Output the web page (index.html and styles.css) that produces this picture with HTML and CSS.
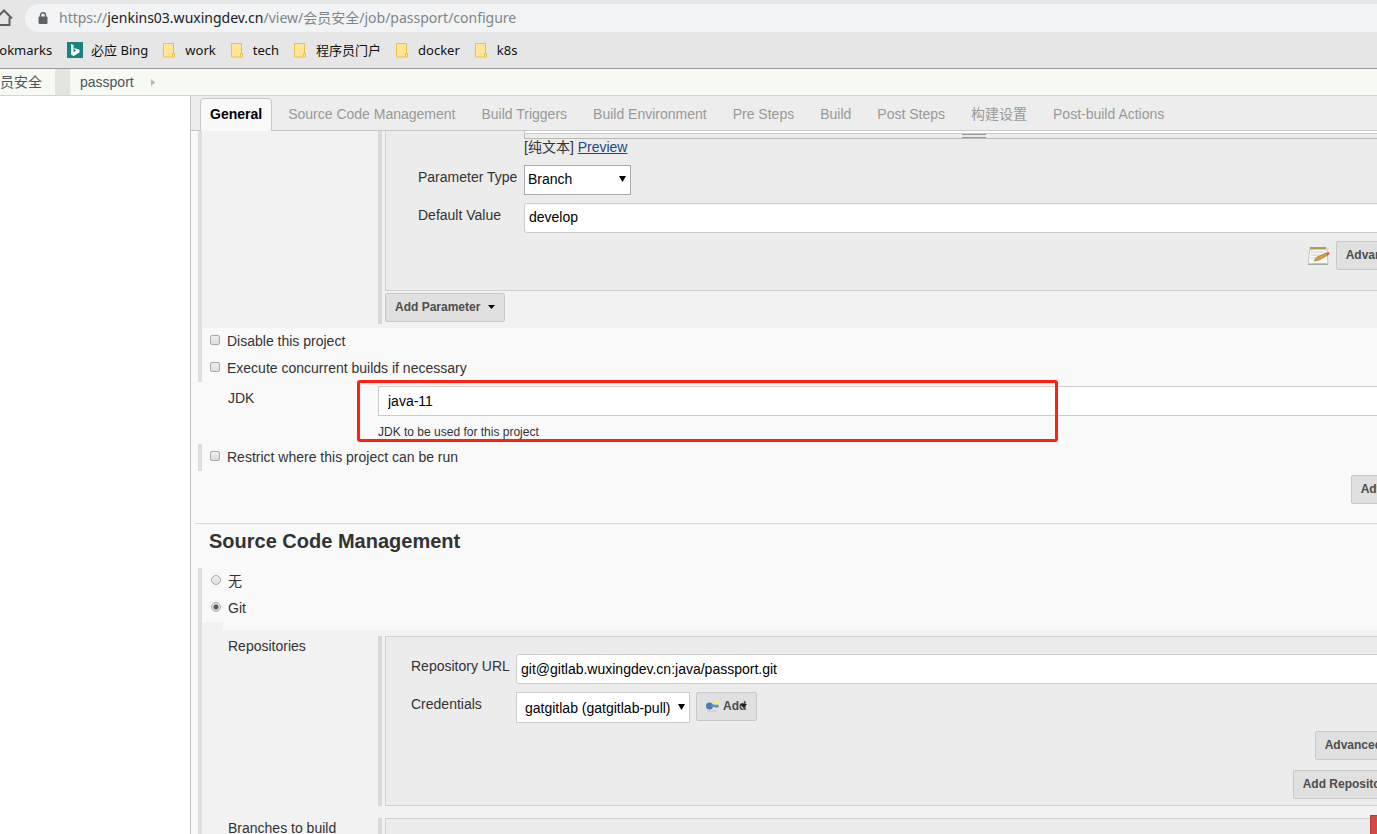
FILE: index.html
```html
<!DOCTYPE html>
<html lang="en">
<head>
<meta charset="utf-8">
<title>passport Config [Jenkins]</title>
<link rel="stylesheet" href="styles.css">
</head>
<body>
<header class="browser">
  <div class="toolbar">
    <svg class="home" width="18" height="18" viewBox="0 0 18 18" aria-hidden="true"><path d="M1 9.500 9 1.500l8 8M3.500 8.500V16h11V8.500" fill="none" stroke="#5b5e62" stroke-width="2"/></svg>
    <div class="address">
      <svg width="10" height="12" viewBox="0 0 10 12" aria-hidden="true"><path d="M2.500 5V3.200a2.500 2.500 0 0 1 5 0V5" fill="none" stroke="#5f6368" stroke-width="1.400"/><rect x="0.500" y="4.500" width="9" height="7.500" rx="1" fill="#5f6368"/></svg>
      <span class="url">https://<b>jenkins03.wuxingdev.cn</b>/view/会员安全/job/passport/configure</span>
    </div>
  </div>
  <nav class="bookmarks" aria-label="Bookmarks">
    <a href="#">Bookmarks</a>
    <a href="#"><svg width="16" height="16" viewBox="0 0 16 16" aria-hidden="true"><rect width="16" height="16" fill="#188480"/><path d="M4 2l2.500 1v7.300L9.300 8.600 7.900 8 7.100 5.900 12.500 7.800v2.700L6.500 14 4 12.600z" fill="#fff"/></svg>必应 Bing</a>
    <a href="#"><svg class="folder" width="12" height="15" viewBox="0 0 12 15" aria-hidden="true"><path d="M.5.500h10V10.500h1v3.500H.5z" fill="#ffe594" stroke="#e8c04c"/><path d="M9.500 13.500v-3h1.500" fill="none" stroke="#e8c04c"/></svg>work</a>
    <a href="#"><svg class="folder" width="12" height="15" viewBox="0 0 12 15" aria-hidden="true"><path d="M.5.500h10V10.500h1v3.500H.5z" fill="#ffe594" stroke="#e8c04c"/><path d="M9.500 13.500v-3h1.500" fill="none" stroke="#e8c04c"/></svg>tech</a>
    <a href="#"><svg class="folder" width="12" height="15" viewBox="0 0 12 15" aria-hidden="true"><path d="M.5.500h10V10.500h1v3.500H.5z" fill="#ffe594" stroke="#e8c04c"/><path d="M9.500 13.500v-3h1.500" fill="none" stroke="#e8c04c"/></svg>程序员门户</a>
    <a href="#"><svg class="folder" width="12" height="15" viewBox="0 0 12 15" aria-hidden="true"><path d="M.5.500h10V10.500h1v3.500H.5z" fill="#ffe594" stroke="#e8c04c"/><path d="M9.500 13.500v-3h1.500" fill="none" stroke="#e8c04c"/></svg>docker</a>
    <a href="#"><svg class="folder" width="12" height="15" viewBox="0 0 12 15" aria-hidden="true"><path d="M.5.500h10V10.500h1v3.500H.5z" fill="#ffe594" stroke="#e8c04c"/><path d="M9.500 13.500v-3h1.500" fill="none" stroke="#e8c04c"/></svg>k8s</a>
  </nav>
</header>
<nav class="crumbs" aria-label="Breadcrumb">
  <a class="crumb-view" href="#">会员安全</a>
  <a class="crumb-job" href="#">passport</a>
  <svg width="4" height="7" viewBox="0 0 4 7" aria-hidden="true"><path d="M0 0l4 3.500L0 7z" fill="#b5b8b2"/></svg>
</nav>
<div class="page">
  <aside class="side"></aside>
  <main class="panel">
    <nav class="tabs" aria-label="Sections">
      <a class="tab active" href="#">General</a>
      <a class="tab" href="#">Source Code Management</a>
      <a class="tab" href="#">Build Triggers</a>
      <a class="tab" href="#">Build Environment</a>
      <a class="tab" href="#">Pre Steps</a>
      <a class="tab" href="#">Build</a>
      <a class="tab" href="#">Post Steps</a>
      <a class="tab" href="#">构建设置</a>
      <a class="tab" href="#">Post-build Actions</a>
    </nav>
    <form class="form">
      <div class="rail">
        <div class="nested params">
          <div class="repeat">
            <div class="box param-box">
              <div class="row">
                <span></span>
                <div>
                  <div class="textarea-end"></div>
                  <div class="resizer"><i></i></div>
                  <div class="preview">[纯文本] <a href="#">Preview</a></div>
                </div>
              </div>
              <div class="row">
                <label for="ptype">Parameter Type</label>
                <div class="select branch"><select id="ptype"><option>Branch</option></select><svg width="7" height="6" viewBox="0 0 7 6" aria-hidden="true"><path d="M0 0h7L3.500 6z"/></svg></div>
              </div>
              <div class="row">
                <label for="pdefault">Default Value</label>
                <input class="text" id="pdefault" type="text" value="develop">
              </div>
              <div class="actions">
                <svg width="22" height="20" viewBox="0 0 22 20" aria-hidden="true"><path d="M2 2h17l1 16H0z" fill="#f8f8f6" stroke="#c4c4c2"/><path d="M0 17.500h20v1.500H0z" fill="#aaa"/><path d="M2 1h16v2.500H2z" fill="#aaa054"/><path d="M3 6h12M3 9h9M3 12h5" stroke="#ccc"/><path d="M6 15l3-4 9-4 2 2-9 5z" fill="#d6a142" stroke="#8d6828" stroke-width=".6"/><path d="M18 7l3-1 .5 2-2 1.500z" fill="#e0524a"/></svg>
                <button type="button" class="btn">Advanced...</button>
              </div>
            </div>
            <button type="button" class="btn add-param">Add Parameter <svg width="7" height="4" viewBox="0 0 7 4" aria-hidden="true"><path d="M0 0h7L3.500 4z"/></svg></button>
          </div>
        </div>
        <label class="option"><input type="checkbox">Disable this project</label>
        <label class="option"><input type="checkbox">Execute concurrent builds if necessary</label>
      </div>
      <div class="jdk">
        <label for="jdk">JDK</label>
        <div>
          <div class="select wide"><select id="jdk"><option>java-11</option></select></div>
          <p class="help">JDK to be used for this project</p>
        </div>
        <div class="highlight"></div>
      </div>
      <div class="rail">
        <label class="option"><input type="checkbox">Restrict where this project can be run</label>
      </div>
      <div class="actions general-actions"><button type="button" class="btn">Advanced...</button></div>
      <h2 class="section">Source Code Management</h2>
      <div class="rail">
        <label class="option radio"><input type="radio" name="scm">无</label>
        <label class="option radio"><input type="radio" name="scm" checked>Git</label>
        <div class="notch"></div>
        <div class="nested repos">
          <span class="name">Repositories</span>
          <div class="repeat">
            <div class="box repo-box">
              <div class="row">
                <label for="url">Repository URL</label>
                <input class="text" id="url" type="text" value="git@gitlab.wuxingdev.cn:java/passport.git">
              </div>
              <div class="row">
                <label for="cred">Credentials</label>
                <div class="creds">
                  <div class="select cred"><select id="cred"><option>gatgitlab (gatgitlab-pull)</option></select><svg width="7" height="6" viewBox="0 0 7 6" aria-hidden="true"><path d="M0 0h7L3.500 6z"/></svg></div>
                  <button type="button" class="btn add-cred"><svg width="13" height="12" viewBox="0 0 13 12" aria-hidden="true"><ellipse cx="6" cy="11" rx="5" ry="1" fill="#d0d0d0"/><circle cx="3.500" cy="6" r="3.500" fill="#4b7ab5"/><path d="M5 4.500h7.500v2.500l-1 1-1-1-1 1-1-1H5z" fill="#5d8cc6"/><circle cx="10.500" cy="2.500" r="2.200" fill="#f7ef6e"/></svg><span>Add</span><svg class="caret" width="7" height="4" viewBox="0 0 7 4" aria-hidden="true"><path d="M0 0h7L3.500 4z"/></svg></button>
                </div>
              </div>
              <div class="actions"><button type="button" class="btn">Advanced...</button></div>
              <div class="actions"><button type="button" class="btn">Add Repository</button></div>
            </div>
          </div>
        </div>
        <div class="nested branches">
          <span class="name">Branches to build</span>
          <div class="repeat">
            <div class="box branch-box"><button type="button" class="delete" aria-label="Delete branch"></button></div>
          </div>
        </div>
      </div>
    </form>
  </main>
</div>
</body>
</html>
```
FILE: styles.css
```css
* { box-sizing: border-box; }

body {
  margin: 0;
  height: 100vh;
  display: flex;
  flex-direction: column;
  overflow: hidden;
  background: #fff;
  color: #333;
  font: 14px/18px "Liberation Sans", "Noto Sans CJK SC", sans-serif;
}

svg { flex: none; display: block; }
a { color: inherit; text-decoration: none; }

/* Browser chrome */
.browser {
  flex: none;
  background: #e6e6e6;
  border-bottom: 1px solid #999;
  font-family: "Noto Sans", "Noto Sans CJK SC", sans-serif;
}
.toolbar { display: flex; align-items: center; gap: 12px; padding-top: 4px; }
.home { margin-left: -5px; }
.address {
  flex: 1;
  display: flex;
  align-items: center;
  gap: 11px;
  height: 28px;
  padding-left: 13px;
  border-radius: 14px 0 0 14px;
  background: #f1f3f4;
}
.url { font-size: 14px; color: #80868b; white-space: nowrap; }
.url b { font-weight: 400; color: #202124; }
.bookmarks {
  display: flex;
  align-items: center;
  gap: 15px;
  height: 36px;
  margin-left: -17px;
  font-size: 13px;
  color: #111;
  white-space: nowrap;
}
.bookmarks a { display: flex; align-items: center; gap: 8px; }
.folder { margin-right: 2px; }

/* Breadcrumb */
.crumbs {
  flex: none;
  display: flex;
  align-items: center;
  height: 27px;
  border-bottom: 1px solid #d3d7cf;
  background: #f6faf2;
  color: #4d545d;
}
.crumb-view {
  margin-left: -14px;
  padding: 4px 13px 4px 0;
  border-right: 15px solid #e2e6de;
}
.crumb-job { padding: 0 17px 0 10px; }

/* Page */
.page { flex: 1; min-height: 0; display: flex; }
.side { flex: 0 0 190px; }
.panel {
  flex: 1;
  min-width: 0;
  overflow: hidden;
  border-left: 1px solid #c4c4c4;
  background: #f9f9f9;
}
.tabs {
  display: flex;
  align-items: flex-end;
  height: 35px;
  padding-left: 9px;
  border-bottom: 1px solid #c8c8c8;
  background: #ededed;
  color: #999;
  white-space: nowrap;
}
.tab { padding: 6px 9px 7px; border: 1px solid transparent; border-bottom: 0; margin-right: 6px; }
.tab.active {
  margin-bottom: -1px;
  padding-bottom: 8px;
  border-color: #c8c8c8;
  border-radius: 4px 4px 0 0;
  background: #f9f9f9;
  color: #000;
  font-weight: 700;
}

/* The form is wider than the window and runs off its right edge */
.form { margin-right: -61px; padding-left: 7px; }
.rail { border-left: 4px solid #dedede; }
.nested {
  display: grid;
  grid-template-columns: 176px 1fr;
  background: #f2f2f2;
}
.params { padding-bottom: 4px; }
.params .repeat { grid-column: 2; padding-bottom: 2px; }
.repeat { border-left: 4px solid #d9d9d9; padding-left: 3px; }
.box { border: 1px solid #d0d0d0; background: #ececec; }
.param-box { border-top: 0; padding: 0 14px 20px 32px; margin-bottom: 2px; }
.row { display: grid; margin-bottom: 8px; }
.row label { padding-top: 3px; }
.param-box .row { grid-template-columns: 106px 1fr; }
.textarea-end { height: 3px; border: 1px solid #c8c8c8; border-top: 0; background: #fff; }
.resizer {
  height: 5px;
  border: solid #b8bbb0;
  border-width: 0 1px 1px;
}
.resizer i {
  display: block;
  width: 24px;
  height: 4px;
  margin: 0 auto;
  border: solid #999;
  border-width: 1px 0;
}
.preview { margin-bottom: 2px; line-height: 16px; }
.preview a { color: #204a87; text-decoration: underline; }

.text, .select select {
  width: 100%;
  height: 30px;
  margin: 0;
  border: 1px solid #ccc;
  background: #fff;
  color: #000;
  font: inherit;
}
.text { padding: 0 4px; border-radius: 3px; }
.select { display: grid; align-items: center; }
.select select { grid-area: 1 / 1; appearance: none; border-radius: 0; padding: 0 9px; }
.select svg { grid-area: 1 / 1; justify-self: end; margin: 0 5px 2px 0; pointer-events: none; }
.param-box .text { padding-bottom: 2px; }
.branch { width: 107px; }
.branch select { border-color: #aaa; padding: 0 3px 2px; }

.btn {
  height: 29px;
  padding: 0 9px 2px;
  border: 1px solid #c8c8c8;
  border-radius: 2px;
  background: #e0e0e0;
  color: #4d4d4d;
  font: 700 12px/16px "Liberation Sans", sans-serif;
  white-space: nowrap;
}
.actions { display: flex; justify-content: flex-end; align-items: center; gap: 6px; }
.add-param { display: flex; align-items: center; gap: 8px; }
.add-param svg { fill: #000; }

.option { display: flex; align-items: center; gap: 7px; height: 27px; padding: 0 0 2px 8px; }
.option input {
  appearance: none;
  width: 10px;
  height: 10px;
  margin: 0 0 2px;
  border: 1px solid #aaa;
  border-radius: 2px;
  background: linear-gradient(#eee, #ddd);
}
.option.radio input { margin-left: 1px; border-radius: 50%; }
.option.radio input:checked { background: radial-gradient(#555 0 2px, #e6e6e6 3px); }

.jdk {
  position: relative;
  display: grid;
  grid-template-columns: 150px 1fr;
  height: 62px;
  padding: 4px 0 0 30px;
}
.jdk label { padding-top: 3px; }
.help { margin: 7px 0 0; font-size: 12px; line-height: 18px; }
.highlight {
  position: absolute;
  left: 159px;
  top: -2px;
  width: 701px;
  height: 62px;
  border: 3px solid #ff2010;
  border-radius: 3px;
  pointer-events: none;
}
.general-actions { padding-top: 4px; }
.section {
  margin: 19px 0 14px -3px;
  padding: 5px 14px 0;
  border-top: 1px solid #d9d9d9;
  font-size: 20px;
  line-height: 25px;
}
.notch { height: 8px; border-left: 21px solid #f2f2f2; }
.repos { padding: 6px 0 12px; }
.name { padding: 1px 0 0 26px; }
.repo-box { padding: 17px 35px 6px 25px; }
.repo-box .row { grid-template-columns: 105px 1fr; }
.creds { display: flex; gap: 6px; align-items: flex-start; }
.cred { width: 174px; }
.cred select { height: 31px; padding: 0 8px; }
.repo-box .actions + .actions { margin-top: 10px; }
.add-cred { display: flex; align-items: center; gap: 4px; }
.add-cred .caret { margin-left: -10px; fill: #222; }
.branch-box { min-height: 60px; padding-right: 37px; }
.delete {
  display: block;
  width: 30px;
  height: 27px;
  margin: -4px 0 0 auto;
  border: 1px solid #b53a32;
  background: #d24b42;
}
```
